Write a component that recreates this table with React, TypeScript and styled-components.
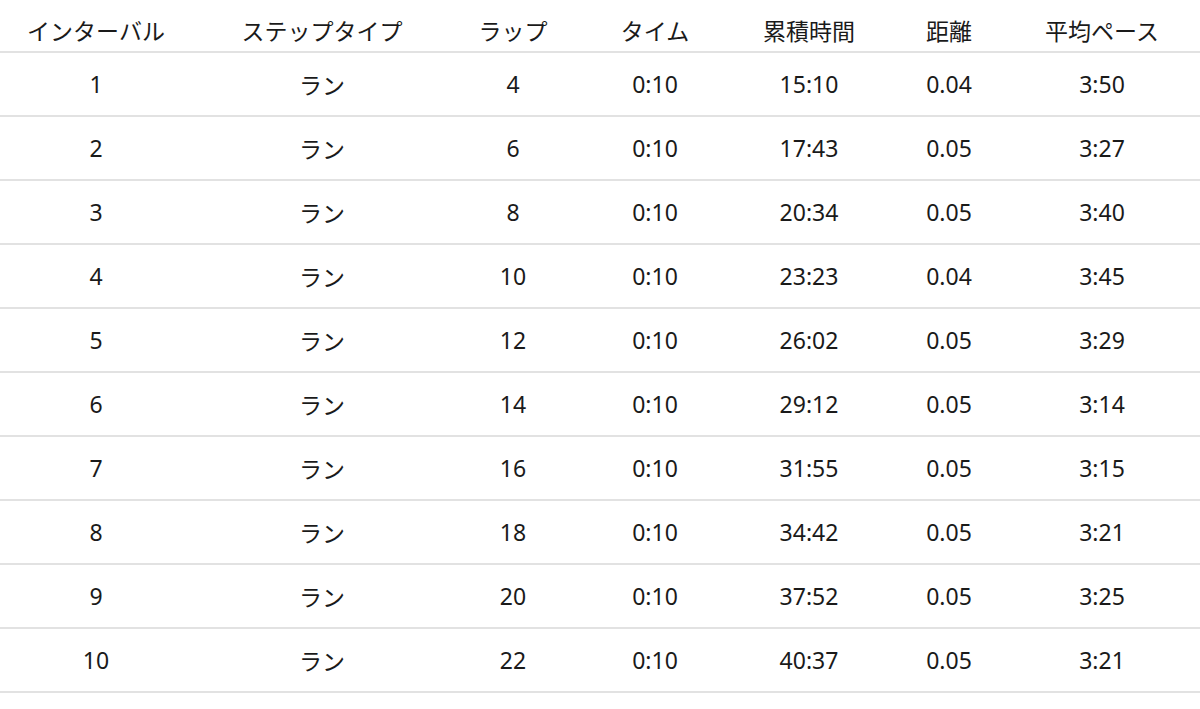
import React from 'react';
import styled, { createGlobalStyle } from 'styled-components';

const GlobalStyle = createGlobalStyle`
  body {
    margin: 0;
    background: #ffffff;
    font-family: 'Noto Sans', 'Noto Sans CJK JP', sans-serif;
    color: #1a1a1a;
  }
`;

const COLUMN_WIDTHS = [192, 260, 122, 162, 146, 134, 184];

const Table = styled.table`
  width: 1200px;
  border-collapse: collapse;
  table-layout: fixed;
  font-size: 23px;
`;

const HeaderCell = styled.th<{ $last?: boolean }>`
  height: 42px;
  padding: 9px ${(p) => (p.$last ? '12px' : '0')} 0 0;
  font-weight: 400;
  text-align: center;
  vertical-align: middle;
  border-bottom: 2px solid #e2e2e2;
  white-space: nowrap;
`;

const Cell = styled.td<{ $last?: boolean }>`
  height: 62px;
  padding: 0 ${(p) => (p.$last ? '12px' : '0')} 0 0;
  text-align: center;
  vertical-align: middle;
  border-bottom: 2px solid #e2e2e2;
`;

const headers = ['インターバル', 'ステップタイプ', 'ラップ', 'タイム', '累積時間', '距離', '平均ペース'];

const rows: [number, string, number, string, string, string, string][] = [
  [1, 'ラン', 4, '0:10', '15:10', '0.04', '3:50'],
  [2, 'ラン', 6, '0:10', '17:43', '0.05', '3:27'],
  [3, 'ラン', 8, '0:10', '20:34', '0.05', '3:40'],
  [4, 'ラン', 10, '0:10', '23:23', '0.04', '3:45'],
  [5, 'ラン', 12, '0:10', '26:02', '0.05', '3:29'],
  [6, 'ラン', 14, '0:10', '29:12', '0.05', '3:14'],
  [7, 'ラン', 16, '0:10', '31:55', '0.05', '3:15'],
  [8, 'ラン', 18, '0:10', '34:42', '0.05', '3:21'],
  [9, 'ラン', 20, '0:10', '37:52', '0.05', '3:25'],
  [10, 'ラン', 22, '0:10', '40:37', '0.05', '3:21'],
];

const App = () => {
  const last = headers.length - 1;
  return (
    <>
      <GlobalStyle />
      <Table>
        <colgroup>
          {COLUMN_WIDTHS.map((w, i) => (
            <col key={i} style={{ width: w }} />
          ))}
        </colgroup>
        <thead>
          <tr>
            {headers.map((h, i) => (
              <HeaderCell key={h} $last={i === last}>
                {h}
              </HeaderCell>
            ))}
          </tr>
        </thead>
        <tbody>
          {rows.map((row) => (
            <tr key={row[0]}>
              {row.map((value, i) => (
                <Cell key={i} $last={i === last}>
                  {value}
                </Cell>
              ))}
            </tr>
          ))}
        </tbody>
      </Table>
    </>
  );
};

export default App;
